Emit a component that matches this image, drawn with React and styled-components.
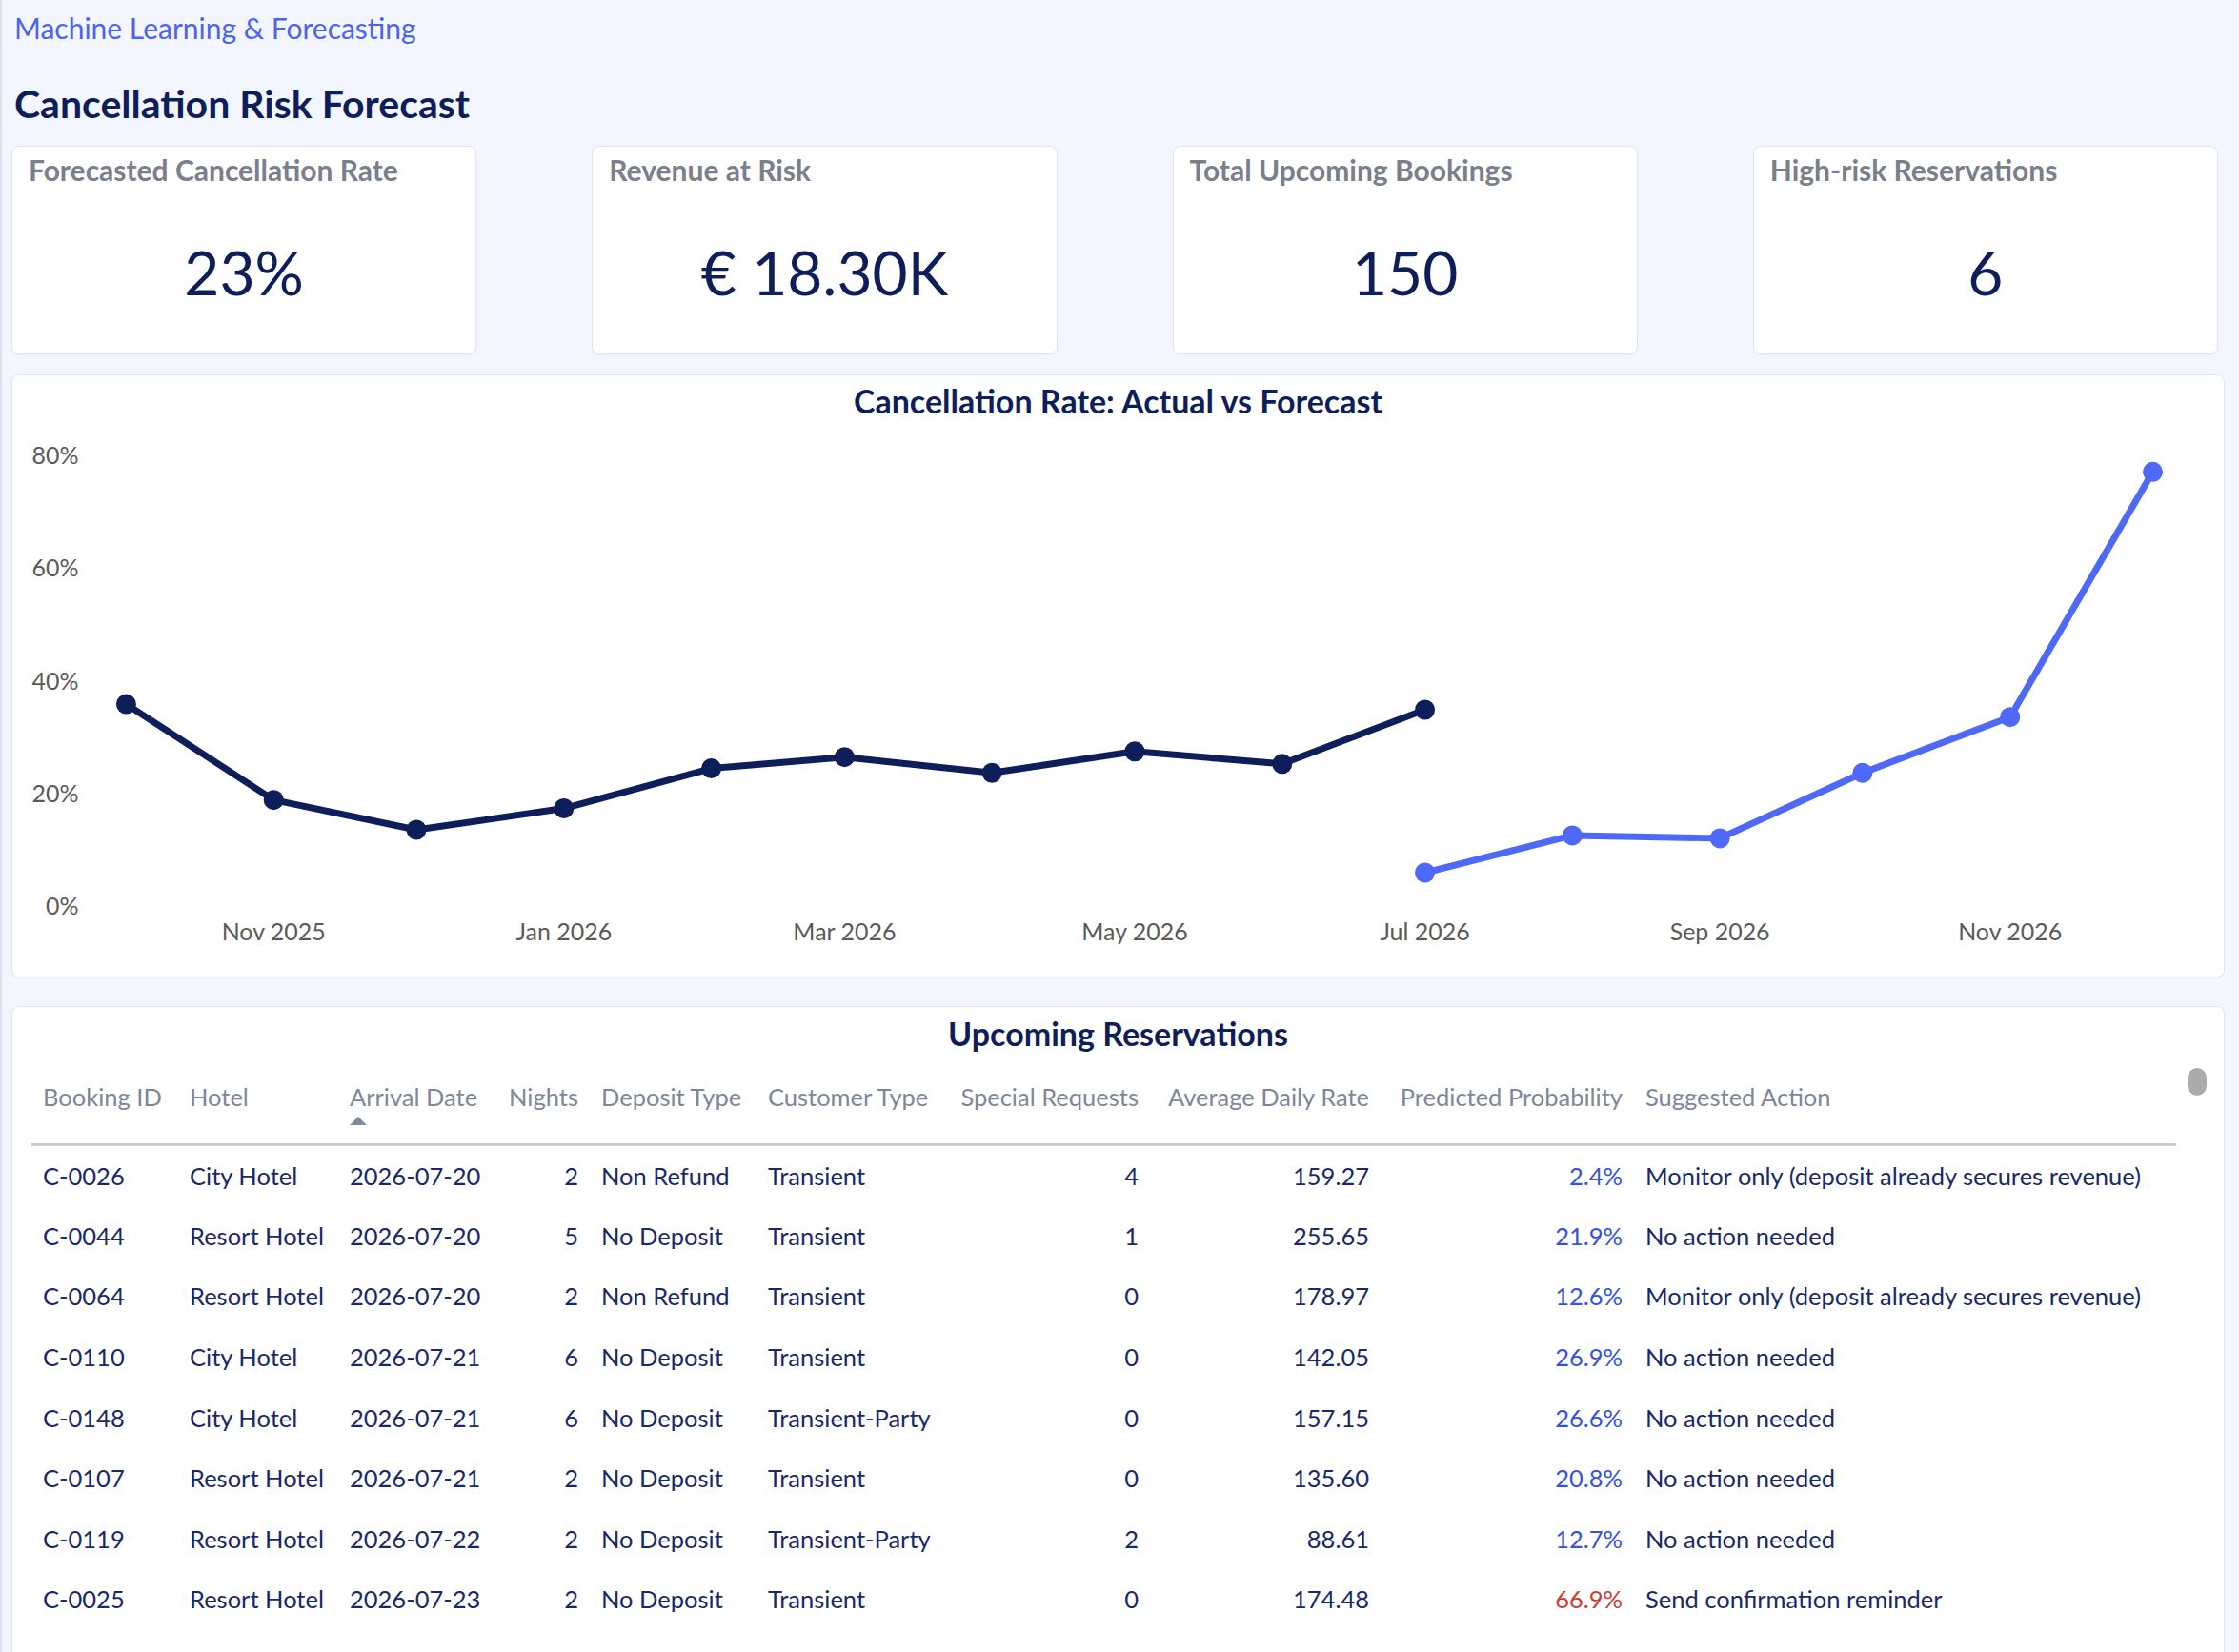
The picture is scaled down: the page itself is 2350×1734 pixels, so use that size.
import React from 'react';
import styled, { createGlobalStyle } from 'styled-components';

const colors = {
    background: '#f3f6fe',
    card: '#ffffff',
    border: '#e1e5f3',
    navy: '#0e1e5b',
    ink: '#18296b',
    muted: '#7a7f8c',
    header: '#7d8799',
    link: '#4b63f2',
    forecast: '#4e68f8',
    prob: '#3451e3',
    risk: '#cf3b32',
    axis: '#5a5a5a',
};

const GlobalStyle = createGlobalStyle`
    html, body {
        margin: 0;
        padding: 0;
        background: ${colors.background};
    }
    body {
        font-family: Lato, "Open Sans", "Liberation Sans", sans-serif;
        color: ${colors.navy};
    }
    * {
        box-sizing: border-box;
    }
`;

const Page = styled.div`
    height: 100vh;
    overflow: hidden;
    padding: 11px 15px 0 10px;
    border-left: 2px solid #dfe2eb;
`;

const Breadcrumb = styled.div`
    font-size: 30px;
    line-height: 1.2;
    color: ${colors.link};
    padding-left: 3px;
`;

const PageTitle = styled.h1`
    margin: 37px 0 0 3px;
    font-size: 41px;
    line-height: 1.2;
    font-weight: 700;
    color: ${colors.navy};
`;

const KpiRow = styled.div`
    display: grid;
    grid-template-columns: repeat(4, 1fr);
    gap: 121px;
    margin-top: 20px;
    padding-right: 7px;
`;

const Card = styled.div`
    background: ${colors.card};
    border: 1px solid ${colors.border};
    border-radius: 8px;
    box-shadow: 0 1px 2px rgba(30, 50, 120, 0.04);
`;

const KpiCard = styled(Card)`
    height: 219px;
    padding: 6px 17px 0;
    display: flex;
    flex-direction: column;
`;

const KpiLabel = styled.div`
    font-size: 30px;
    line-height: 1.2;
    font-weight: 700;
    color: ${colors.muted};
`;

const KpiValue = styled.div`
    margin-top: 58px;
    font-size: 64px;
    line-height: 1;
    text-align: center;
    color: ${colors.navy};
`;

const ChartCard = styled(Card)`
    margin-top: 21px;
    height: 633px;
    padding-top: 7px;
    display: flex;
    flex-direction: column;
`;

const SectionTitle = styled.h2`
    margin: 0;
    font-size: 34px;
    line-height: 1.2;
    font-weight: 700;
    text-align: center;
    color: ${colors.navy};
`;

const TableCard = styled(Card)`
    position: relative;
    margin-top: 30px;
    height: 900px;
    padding-top: 8px;
    overflow: hidden;
`;

const ScrollThumb = styled.div`
    position: absolute;
    top: 64px;
    right: 18px;
    width: 20px;
    height: 29px;
    border-radius: 10px;
    background: #ababab;
`;

const Table = styled.table`
    margin-left: 20px;
    width: 2251px;
    table-layout: fixed;
    border-collapse: collapse;
    font-size: 25.5px;
`;

const Col = styled.col`
    width: ${(p) => p.$w}px;
`;

const Th = styled.th`
    padding: 31px 12px 19px;
    vertical-align: top;
    font-weight: 400;
    line-height: 28px;
    color: ${colors.header};
    text-align: ${(p) => (p.$num ? 'right' : 'left')};
    border-bottom: 3px solid #cdcdcd;
    white-space: nowrap;
`;

const SortArrow = styled.div`
    width: 0;
    height: 0;
    margin-top: 7px;
    border-left: 9.5px solid transparent;
    border-right: 9.5px solid transparent;
    border-bottom: 9px solid #7f8a9c;
`;

const Td = styled.td`
    height: 63.6px;
    padding: 0 12px;
    vertical-align: middle;
    white-space: nowrap;
    color: ${(p) => p.$color || colors.ink};
    text-align: ${(p) => (p.$num ? 'right' : 'left')};
`;

// chart geometry, in svg pixels
const PLOT_H = 584;
const ZERO_Y = 509;
const PX_PER_PCT = 5.925;
const NOV_2025_X = 273;
const PX_PER_DAY = 5;

const xAt = (day) => NOV_2025_X + day * PX_PER_DAY;
const yAt = (pct) => ZERO_Y - pct * PX_PER_PCT;

// day offsets from 1 Nov 2025 for each month start
const actual = [
    [-31, 35.7], [0, 18.7], [30, 13.4], [61, 17.2], [92, 24.3],
    [120, 26.3], [151, 23.5], [181, 27.3], [212, 25.1], [242, 34.7],
];

const forecast = [
    [242, 5.8], [273, 12.4], [304, 11.9], [334, 23.5], [365, 33.4], [395, 76.9],
];

const xTicks = [
    [0, 'Nov 2025'], [61, 'Jan 2026'], [120, 'Mar 2026'], [181, 'May 2026'],
    [242, 'Jul 2026'], [304, 'Sep 2026'], [365, 'Nov 2026'],
];

const yTicks = [0, 20, 40, 60, 80];

const Series = ({ points, color }) => (
    <g>
        <polyline
            points={points.map(([d, v]) => `${xAt(d)},${yAt(v)}`).join(' ')}
            fill="none"
            stroke={color}
            strokeWidth="7"
            strokeLinejoin="round"
        />
        {points.map(([d, v]) => (
            <circle key={d} cx={xAt(d)} cy={yAt(v)} r="10.5" fill={color} />
        ))}
    </g>
);

const RateChart = () => (
    <svg width="2321" height={PLOT_H} viewBox={`0 0 2321 ${PLOT_H}`}>
        <g fontFamily="Lato, 'Open Sans', sans-serif" fontSize="25" fill={colors.axis}>
            {yTicks.map((t) => (
                <text key={t} x="68" y={yAt(t)} textAnchor="end" dominantBaseline="central">
                    {t}%
                </text>
            ))}
            {xTicks.map(([d, label]) => (
                <text key={label} x={xAt(d)} y="536" textAnchor="middle" dominantBaseline="central">
                    {label}
                </text>
            ))}
        </g>
        <Series points={actual} color={colors.navy} />
        <Series points={forecast} color={colors.forecast} />
    </svg>
);

const columns = [
    { key: 'id', label: 'Booking ID', w: 154 },
    { key: 'hotel', label: 'Hotel', w: 168 },
    { key: 'arrival', label: 'Arrival Date', w: 158, sorted: true },
    { key: 'nights', label: 'Nights', w: 106, num: true },
    { key: 'deposit', label: 'Deposit Type', w: 175 },
    { key: 'customer', label: 'Customer Type', w: 197 },
    { key: 'requests', label: 'Special Requests', w: 216, num: true },
    { key: 'adr', label: 'Average Daily Rate', w: 242, num: true },
    { key: 'prob', label: 'Predicted Probability', w: 266, num: true },
    { key: 'action', label: 'Suggested Action', w: 569 },
];

const MONITOR = 'Monitor only (deposit already secures revenue)';
const NO_ACTION = 'No action needed';

const reservations = [
    ['C-0026', 'City Hotel', '2026-07-20', 2, 'Non Refund', 'Transient', 4, '159.27', 2.4, MONITOR],
    ['C-0044', 'Resort Hotel', '2026-07-20', 5, 'No Deposit', 'Transient', 1, '255.65', 21.9, NO_ACTION],
    ['C-0064', 'Resort Hotel', '2026-07-20', 2, 'Non Refund', 'Transient', 0, '178.97', 12.6, MONITOR],
    ['C-0110', 'City Hotel', '2026-07-21', 6, 'No Deposit', 'Transient', 0, '142.05', 26.9, NO_ACTION],
    ['C-0148', 'City Hotel', '2026-07-21', 6, 'No Deposit', 'Transient-Party', 0, '157.15', 26.6, NO_ACTION],
    ['C-0107', 'Resort Hotel', '2026-07-21', 2, 'No Deposit', 'Transient', 0, '135.60', 20.8, NO_ACTION],
    ['C-0119', 'Resort Hotel', '2026-07-22', 2, 'No Deposit', 'Transient-Party', 2, '88.61', 12.7, NO_ACTION],
    ['C-0025', 'Resort Hotel', '2026-07-23', 2, 'No Deposit', 'Transient', 0, '174.48', 66.9, 'Send confirmation reminder'],
];

const probColor = (p) => (p >= 50 ? colors.risk : colors.prob);

const kpis = [
    { label: 'Forecasted Cancellation Rate', value: '23%' },
    { label: 'Revenue at Risk', value: '€ 18.30K' },
    { label: 'Total Upcoming Bookings', value: '150' },
    { label: 'High-risk Reservations', value: '6' },
];

const App = () => (
    <>
        <GlobalStyle />
        <Page>
            <Breadcrumb>Machine Learning &amp; Forecasting</Breadcrumb>
            <PageTitle>Cancellation Risk Forecast</PageTitle>

            <KpiRow>
                {kpis.map((k) => (
                    <KpiCard key={k.label}>
                        <KpiLabel>{k.label}</KpiLabel>
                        <KpiValue>{k.value}</KpiValue>
                    </KpiCard>
                ))}
            </KpiRow>

            <ChartCard>
                <SectionTitle>Cancellation Rate: Actual vs Forecast</SectionTitle>
                <RateChart />
            </ChartCard>

            <TableCard>
                <SectionTitle>Upcoming Reservations</SectionTitle>
                <ScrollThumb />
                <Table>
                    <colgroup>
                        {columns.map((c) => (
                            <Col key={c.key} $w={c.w} />
                        ))}
                    </colgroup>
                    <thead>
                        <tr>
                            {columns.map((c) => (
                                <Th key={c.key} $num={c.num}>
                                    {c.label}
                                    {c.sorted && <SortArrow />}
                                </Th>
                            ))}
                        </tr>
                    </thead>
                    <tbody>
                        {reservations.map((r) => (
                            <tr key={r[0]}>
                                <Td>{r[0]}</Td>
                                <Td>{r[1]}</Td>
                                <Td>{r[2]}</Td>
                                <Td $num>{r[3]}</Td>
                                <Td>{r[4]}</Td>
                                <Td>{r[5]}</Td>
                                <Td $num>{r[6]}</Td>
                                <Td $num>{r[7]}</Td>
                                <Td $num $color={probColor(r[8])}>
                                    {r[8].toFixed(1)}%
                                </Td>
                                <Td>{r[9]}</Td>
                            </tr>
                        ))}
                    </tbody>
                </Table>
            </TableCard>
        </Page>
    </>
);

export default App;
